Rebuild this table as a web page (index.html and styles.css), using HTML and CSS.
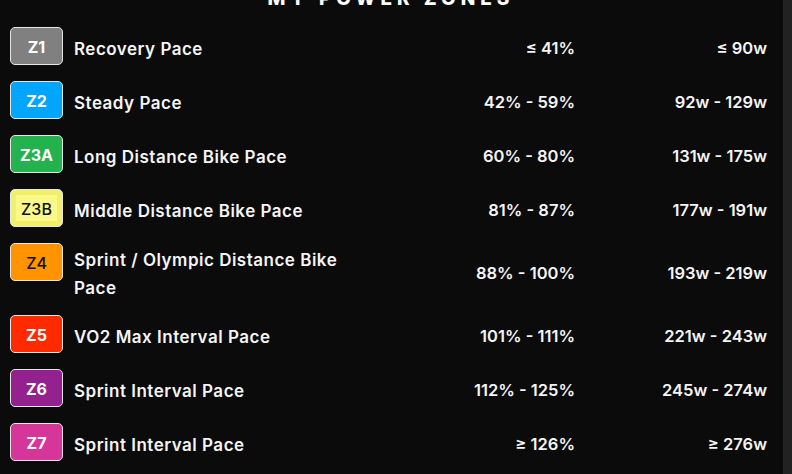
FILE: index.html
```html
<!DOCTYPE html>
<html lang="en">
<head>
<meta charset="utf-8">
<title>My Power Zones</title>
<link rel="stylesheet" href="styles.css">
</head>
<body>
<div class="page">
  <main class="panel">
    <h2 class="title">MY POWER ZONES</h2>
    <div class="zones">
      <div class="zone">
        <span class="badge z1">Z1</span>
        <span class="name">Recovery Pace</span>
        <span class="pct">≤ 41%</span>
        <span class="watts">≤ 90w</span>
      </div>
      <div class="zone">
        <span class="badge z2">Z2</span>
        <span class="name">Steady Pace</span>
        <span class="pct">42% - 59%</span>
        <span class="watts">92w - 129w</span>
      </div>
      <div class="zone">
        <span class="badge z3a">Z3A</span>
        <span class="name">Long Distance Bike Pace</span>
        <span class="pct">60% - 80%</span>
        <span class="watts">131w - 175w</span>
      </div>
      <div class="zone">
        <span class="badge z3b">Z3B</span>
        <span class="name">Middle Distance Bike Pace</span>
        <span class="pct">81% - 87%</span>
        <span class="watts">177w - 191w</span>
      </div>
      <div class="zone">
        <span class="badge z4">Z4</span>
        <span class="name">Sprint / Olympic Distance Bike Pace</span>
        <span class="pct">88% - 100%</span>
        <span class="watts">193w - 219w</span>
      </div>
      <div class="zone">
        <span class="badge z5">Z5</span>
        <span class="name">VO2 Max Interval Pace</span>
        <span class="pct">101% - 111%</span>
        <span class="watts">221w - 243w</span>
      </div>
      <div class="zone">
        <span class="badge z6">Z6</span>
        <span class="name">Sprint Interval Pace</span>
        <span class="pct">112% - 125%</span>
        <span class="watts">245w - 274w</span>
      </div>
      <div class="zone">
        <span class="badge z7">Z7</span>
        <span class="name">Sprint Interval Pace</span>
        <span class="pct">≥ 126%</span>
        <span class="watts">≥ 276w</span>
      </div>
    </div>
  </main>
  <div class="track"></div>
</div>
</body>
</html>
```

FILE: styles.css
```css
html, body {
  margin: 0;
  padding: 0;
  height: 100%;
  overflow: hidden;
  background: #0b0b0b;
}

.page {
  display: flex;
  height: 474px;
  font-family: "Inter", "Liberation Sans", sans-serif;
  color: #f4f4f4;
}

.panel {
  flex: 1;
  padding: 0 16px 0 10px;
  overflow: hidden;
}

.track {
  width: 9px;
  background: #222222;
}

.title {
  margin: -11px 0 0 0;
  text-align: center;
  font-size: 19px;
  line-height: 20px;
  font-weight: 800;
  letter-spacing: 5px;
  color: #ffffff;
  padding-left: 5px;
}

.zones {
  display: flex;
  flex-direction: column;
  gap: 16px;
  margin-top: 18px;
}

.zone {
  display: grid;
  grid-template-columns: 53px 300px 1fr 192px;
  align-items: center;
  font-weight: 600;
  font-size: 17px;
  line-height: 28px;
}

.badge {
  align-self: start;
  box-sizing: border-box;
  height: 38px;
  border: 1px solid #e6e6e6;
  border-radius: 5px;
  display: flex;
  align-items: center;
  justify-content: center;
  font-size: 16px;
  font-weight: 700;
  color: #ffffff;
  padding-top: 2px;
}

.name {
  padding: 3px 14px 0 11px;
  margin-bottom: -3px;
  letter-spacing: 0.5px;
}

.pct, .watts {
  text-align: right;
  padding-top: 4px;
  font-size: 16.5px;
}

.z1 { background: #808080; }
.z2 { background: #00a6fb; }
.z3a { background: #24b24f; }
.z3b {
  background: #fbf98a;
  box-shadow: inset 0 0 0 5px #f2ef6a;
  color: #111;
  font-weight: 500;
}
.z4 { background: #ff9300; color: #111; font-weight: 500; }
.z5 { background: #ff2a00; }
.z6 { background: #93228f; }
.z7 { background: #d6359a; }
```
